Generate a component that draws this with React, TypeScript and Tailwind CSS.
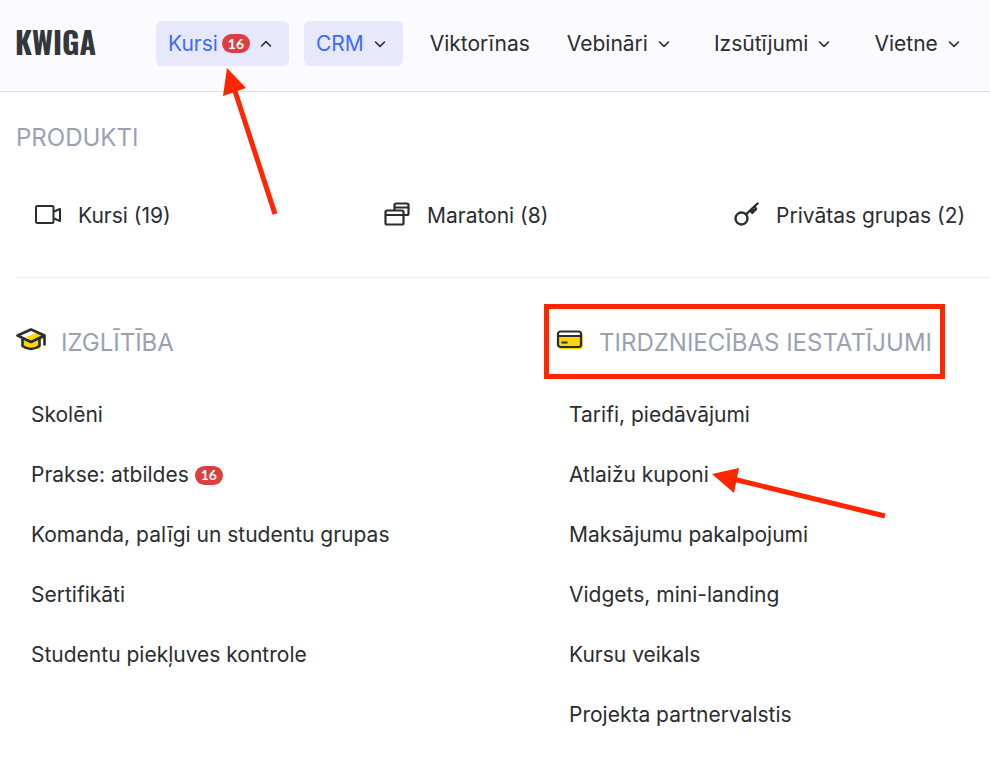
import type { ReactNode } from 'react';

type NavItem = {
  label: string;
  count?: number;
  active?: boolean;
  menu?: boolean;
  open?: boolean;
};

const navItems: NavItem[] = [
  { label: 'Kursi', count: 16, active: true, menu: true, open: true },
  { label: 'CRM', active: true, menu: true },
  { label: 'Viktorīnas' },
  { label: 'Vebināri', menu: true },
  { label: 'Izsūtījumi', menu: true },
  { label: 'Vietne', menu: true },
];

const educationLinks = [
  { label: 'Skolēni' },
  { label: 'Prakse: atbildes', count: 16 },
  { label: 'Komanda, palīgi un studentu grupas' },
  { label: 'Sertifikāti' },
  { label: 'Studentu piekļuves kontrole' },
];

const salesLinks = [
  { label: 'Tarifi, piedāvājumi' },
  { label: 'Atlaižu kuponi', arrow: true },
  { label: 'Maksājumu pakalpojumi' },
  { label: 'Vidgets, mini-landing' },
  { label: 'Kursu veikals' },
  { label: 'Projekta partnervalstis' },
];

const Chevron = ({ open }: { open?: boolean }) => (
  <svg
    width="12"
    height="8"
    viewBox="0 0 12 8"
    fill="none"
    stroke="#2b2d30"
    strokeWidth="1.6"
    strokeLinecap="round"
    strokeLinejoin="round"
    aria-hidden="true"
  >
    <path d={open ? 'M1.5 6 6 1.7 10.5 6' : 'M1.5 2 6 6.3 10.5 2'} />
  </svg>
);

const Badge = ({ value }: { value: number }) => (
  <span className="inline-flex h-[19px] w-7 items-center justify-center rounded-full bg-[#dc3f41] font-['Lato',sans-serif] text-sm font-bold text-white">
    {value}
  </span>
);

const VideoIcon = () => (
  <svg width="28" height="28" viewBox="0 0 28 28" fill="none" stroke="#2b2d30" strokeWidth="2" strokeLinejoin="round" aria-hidden="true">
    <rect x="2" y="4" width="17.500" height="17" rx="1.500" />
    <path d="m20 9.500 6-2.500v12l-6-2.500" />
  </svg>
);

const WindowsIcon = () => (
  <svg width="28" height="28" viewBox="0 0 28 28" fill="none" stroke="#2b2d30" strokeWidth="2.200" strokeLinejoin="round" aria-hidden="true">
    <rect x="2.500" y="8.500" width="18" height="14" rx="1.500" />
    <path d="M2.500 13h18M11.500 8V3q0-1.500 1.500-1.500h11q1.500 0 1.500 1.500v8.500q0 1.500-1.500 1.500h-3M11.500 5.500h14" />
  </svg>
);

const KeyIcon = () => (
  <svg width="28" height="28" viewBox="0 0 28 28" fill="none" stroke="#2b2d30" strokeWidth="2.400" strokeLinecap="round" strokeLinejoin="round" aria-hidden="true">
    <circle cx="9.500" cy="16.500" r="6" />
    <path d="M14 12.300 25.500 1.500M18.500 8.500l1.800 2.300 1.300-1.200-.3-1.600 1.700.2 1-1.300-1.500-2.300" />
  </svg>
);

const CapIcon = () => (
  <svg className="mb-1.5" width="30" height="24" viewBox="0 0 30 24" fill="none" aria-hidden="true">
    <path d="m8 8 10-5 10 4v4l-4 1v9H8l-2-6z" fill="#ffd60a" />
    <path d="M2 7.500 15 2l12 5.500-12 6z" fill="#fff" />
    <path d="m10 9 11-4.300 6 2.800-12 6z" fill="#ffd60a" />
    <path
      d="M1.500 7.500 15 1.500l13.500 6L15 14zM6.500 10.500v7.500q8.500 6 17 0v-7.500M28.500 7.500v10"
      stroke="#2b2d30"
      strokeWidth="2.600"
      strokeLinejoin="round"
    />
  </svg>
);

const CardIcon = () => (
  <svg className="mb-1.5" width="30" height="24" viewBox="0 0 30 24" fill="none" aria-hidden="true">
    <rect x="5" y="4" width="24" height="17" rx="3" fill="#ffd60a" />
    <rect x="4" y="3.500" width="23" height="3.500" fill="#fff" />
    <rect x="4" y="3.500" width="23" height="15.500" rx="2.500" stroke="#2b2d30" strokeWidth="2.200" />
    <path d="M4 8h23M7.500 14.500h6" stroke="#2b2d30" strokeWidth="2" />
  </svg>
);

const products: { label: string; icon: ReactNode }[] = [
  { label: 'Kursi (19)', icon: <VideoIcon /> },
  { label: 'Maratoni (8)', icon: <WindowsIcon /> },
  { label: 'Privātas grupas (2)', icon: <KeyIcon /> },
];

const LinkList = ({
  links,
}: {
  links: { label: string; count?: number; arrow?: boolean }[];
}) => (
  <ul className="mt-[26px] px-[15px]">
    {links.map((link) => (
      <li key={link.label} className="flex h-[60px] items-center">
        <a href="#" className="relative flex items-center gap-1.5 whitespace-nowrap">
          {link.label}
          {link.count && <Badge value={link.count} />}
          {link.arrow && (
            <svg
              className="pointer-events-none absolute top-2 left-full ml-0.5"
              width="180"
              height="56"
              viewBox="0 0 180 56"
              aria-hidden="true"
            >
              <path d="m22 12 152 37" stroke="#ff2600" strokeWidth="5" />
              <path d="M1 7 28 1l-5 25z" fill="#ff2600" />
            </svg>
          )}
        </a>
      </li>
    ))}
  </ul>
);

export default function App() {
  return (
    <div className="min-h-screen overflow-x-hidden bg-white font-['Inter',sans-serif] text-[21px] leading-8 text-[#2b2d30]">
      <header className="flex h-[92px] items-center border-b border-[#dfe0e8] bg-[#fbfaff] pb-1 pl-[15px]">
        <a
          href="#"
          className="w-[141px] shrink-0 pb-1 font-['Oswald','Roboto_Condensed','Liberation_Sans_Narrow',sans-serif] text-[30px] font-bold text-[#32373a]"
        >
          KWIGA
        </a>
        <nav className="flex gap-[15px]">
          {navItems.map((item) => (
            <button
              key={item.label}
              type="button"
              aria-expanded={item.menu ? !!item.open : undefined}
              className={`relative flex h-[45px] items-center rounded-md pl-3 ${
                item.menu ? 'pr-[17px]' : 'pr-2.5'
              } ${item.active ? 'bg-[#e8e8fd] text-[#3b6cff]' : ''}`}
            >
              {item.label}
              {item.count && (
                <span className="ml-1 flex">
                  <Badge value={item.count} />
                </span>
              )}
              {item.menu && (
                <span className="ml-2.5">
                  <Chevron open={item.open} />
                </span>
              )}
              {item.open && (
                <svg
                  className="pointer-events-none absolute top-full left-16"
                  width="60"
                  height="152"
                  viewBox="0 0 60 152"
                  aria-hidden="true"
                >
                  <path d="m14 22 41 126" stroke="#ff2600" strokeWidth="5" />
                  <path d="M7 2 3 30l23-8z" fill="#ff2600" />
                </svg>
              )}
            </button>
          ))}
        </nav>
      </header>

      <main className="pl-4">
        <section className="border-b border-[#f0f0f2] pt-[30px] pb-[45px]">
          <h2 className="text-2xl text-[#98a2b3]">PRODUKTI</h2>
          <ul className="mt-[46px] grid grid-cols-[349fr_349fr_276fr]">
            {products.map((product) => (
              <li key={product.label} className="pl-[18px]">
                <a href="#" className="flex items-center gap-4 whitespace-nowrap">
                  {product.icon}
                  {product.label}
                </a>
              </li>
            ))}
          </ul>
        </section>

        <div className="grid grid-cols-[538fr_436fr] pt-[49px]">
          <section>
            <h2 className="flex items-center gap-[15px] text-2xl text-[#98a2b3]">
              <CapIcon />
              IZGLĪTĪBA
            </h2>
            <LinkList links={educationLinks} />
          </section>
          <section>
            <h2 className="relative flex w-fit items-center gap-[15px] text-2xl whitespace-nowrap text-[#98a2b3]">
              <CardIcon />
              TIRDZNIECĪBAS IESTATĪJUMI
              <span className="pointer-events-none absolute -top-[23px] -right-[13px] -bottom-5 -left-2.5 border-5 border-[#ff2600]" />
            </h2>
            <LinkList links={salesLinks} />
          </section>
        </div>
      </main>
    </div>
  );
}
